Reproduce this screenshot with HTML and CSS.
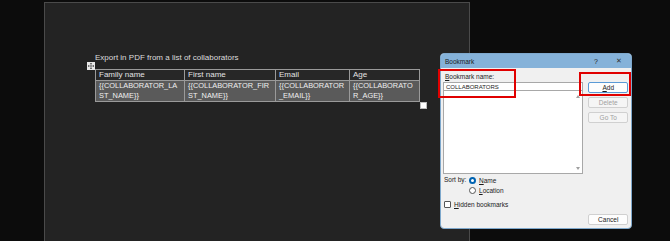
FILE: index.html
```html
<!DOCTYPE html>
<html lang="en">
<head>
<meta charset="UTF-8">
<title>Bookmark</title>
<link rel="stylesheet" href="styles.css">
</head>
<body>
<div class="page">
  <div class="doc">
    <p class="doc-title">Export in PDF from a list of collaborators</p>
    <div class="table-wrap">
      <span class="move-handle">
        <svg width="8" height="8" viewBox="0 0 8 8"><rect width="8" height="8" fill="#e8e8e8"/><path d="M4 1v6M1 4h6M3 2l1-1 1 1M3 6l1 1 1-1M2 3L1 4l1 1M6 3l1 1-1 1" stroke="#555" stroke-width="0.7" fill="none"/></svg>
      </span>
      <table class="grid">
        <tr class="head">
          <td class="c1">Family name</td>
          <td class="c2">First name</td>
          <td class="c3">Email</td>
          <td class="c4">Age</td>
        </tr>
        <tr class="row">
          <td>{{COLLABORATOR_LA<br>ST_NAME}}</td>
          <td>{{COLLABORATOR_FIR<br>ST_NAME}}</td>
          <td>{{COLLABORATOR<br>_EMAIL}}</td>
          <td>{{COLLABORATO<br>R_AGE}}</td>
        </tr>
      </table>
      <span class="resize-handle"></span>
    </div>
  </div>
</div>

<div class="dialog">
  <div class="titlebar">
    <span class="dlg-title">Bookmark</span>
    <span class="dlg-help">?</span>
    <span class="dlg-close">&#x2715;</span>
  </div>
  <div class="dlg-body">
    <div class="left-col">
      <div class="label"><u>B</u>ookmark name:</div>
      <div class="name-input">COLLABORATORS</div>
      <div class="list">
        <span class="arrow up"></span>
        <span class="arrow down"></span>
      </div>
      <div class="sort">
        <span class="sort-label">Sort by:</span>
        <div class="radios">
          <label class="radio-row"><span class="radio on"></span><span><u>N</u>ame</span></label>
          <label class="radio-row"><span class="radio"></span><span><u>L</u>ocation</span></label>
        </div>
      </div>
      <label class="check-row"><span class="check"></span><span><u>H</u>idden bookmarks</span></label>
    </div>
    <div class="right-col">
      <div class="btn default"><u>A</u>dd</div>
      <div class="btn disabled">Delete</div>
      <div class="btn disabled">Go To</div>
      <div class="btn cancel">Cancel</div>
    </div>
  </div>
</div>

<span class="mark mark-name"></span>
<span class="mark mark-add"></span>
</body>
</html>
```
FILE: styles.css
```css
* {
  margin: 0;
  padding: 0;
  box-sizing: border-box;
}
body {
  width: 670px;
  height: 241px;
  overflow: hidden;
  background-color: #0c0c0c;
  position: relative;
  font-family: "Liberation Sans", Arial, sans-serif;
}
.page {
  padding: 2px 0 0 44px;
}
.doc {
  width: 426px;
  height: 250px;
  background-color: #232323;
  border: 1px solid #4a4a4a;
  padding: 50px 0 0 50px;
}
.doc-title {
  font-size: 8px;
  line-height: 10px;
  color: #dcdcdc;
  margin-bottom: 6px;
}
.table-wrap {
  position: relative;
  width: 324px;
}
.move-handle {
  position: absolute;
  left: -8px;
  top: -7px;
  width: 8px;
  height: 8px;
}
.move-handle svg {
  display: block;
}
.grid {
  border-collapse: collapse;
  table-layout: fixed;
  width: 324px;
  font-size: 8px;
  line-height: 10px;
}
.grid td {
  border: 1px solid #9a9a9a;
  padding: 0 0 0 3px;
  white-space: nowrap;
  overflow: hidden;
}
.c1 { width: 89px; }
.c2 { width: 91px; }
.c3 { width: 74px; }
.c4 { width: 70px; }
.head td {
  background-color: #272727;
  color: #e2e2e2;
  height: 11px;
}
.row td {
  background-color: #5a5a5a;
  color: #f0f0f0;
  height: 21px;
  font-size: 7.4px;
}
.resize-handle {
  position: absolute;
  right: -8px;
  bottom: -7px;
  width: 7px;
  height: 7px;
  background-color: #fff;
  border: 1px solid #bbb;
}

/* dialog window floats over the document */
.dialog {
  position: absolute;
  left: 440px;
  top: 53px;
  width: 192px;
  height: 176px;
  background-color: #f0f0f0;
  border: 1px solid #7ea8cc;
  border-radius: 4px;
  overflow: hidden;
  font-size: 6.5px;
  color: #1b1b1b;
}
.titlebar {
  height: 14px;
  background-color: #85b2d9;
  display: flex;
  align-items: center;
  padding: 0 0 0 4px;
}
.dlg-title {
  flex: 1;
}
.dlg-help {
  width: 22px;
  font-size: 7px;
}
.dlg-close {
  width: 15px;
  font-size: 7px;
  color: #333;
}
.dlg-body {
  display: flex;
  padding: 4px 3px 0 2px;
}
.left-col {
  width: 142px;
}
.label {
  height: 9px;
  line-height: 9px;
  padding-left: 2px;
  margin-bottom: 1px;
}
.name-input {
  height: 9px;
  line-height: 8px;
  background-color: #fff;
  border: 1px solid #a8a8a8;
  padding-left: 2px;
  font-size: 6px;
}
.list {
  position: relative;
  height: 83px;
  background-color: #fff;
  border: 1px solid #a8a8a8;
  border-top: none;
}
.arrow {
  position: absolute;
  right: 2px;
  width: 0;
  height: 0;
  border-left: 2.5px solid transparent;
  border-right: 2.5px solid transparent;
}
.arrow.up {
  top: 4px;
  border-bottom: 3px solid #a0a0a0;
}
.arrow.down {
  bottom: 3px;
  border-top: 3px solid #a0a0a0;
}
.sort {
  display: flex;
  margin-top: 2px;
  height: 18px;
}
.sort-label {
  width: 26px;
  line-height: 8px;
  padding-left: 1px;
}
.radios {
  display: flex;
  flex-direction: column;
  gap: 2px;
}
.radio-row,
.check-row {
  display: flex;
  align-items: center;
  gap: 3px;
  height: 8px;
}
.radio {
  width: 7px;
  height: 7px;
  border-radius: 50%;
  border: 1px solid #555;
  background-color: #fff;
}
.radio.on {
  border: 2px solid #0063b1;
}
.check-row {
  margin-top: 6px;
  padding-left: 1px;
}
.check {
  width: 7px;
  height: 7px;
  border: 1px solid #555;
  border-radius: 1px;
  background-color: #fff;
}
.right-col {
  width: 45px;
  display: flex;
  flex-direction: column;
  gap: 4px;
  padding: 10px 0 0 5px;
}
.btn {
  height: 11px;
  line-height: 9px;
  text-align: center;
  border: 1px solid #d0d0d0;
  border-radius: 2px;
  background-color: #fdfdfd;
}
.btn.default {
  border-color: #5a9ad6;
}
.btn.disabled {
  color: #a0a0a0;
  background-color: #f5f5f5;
}
.btn.cancel {
  margin-top: 87px;
}

/* red highlight frames over the screenshot */
.mark {
  position: absolute;
  border: 2px solid #e00000;
}
.mark-name {
  left: 438px;
  top: 69px;
  width: 78px;
  height: 29px;
}
.mark-add {
  left: 579px;
  top: 72px;
  width: 52px;
  height: 24px;
}
```
